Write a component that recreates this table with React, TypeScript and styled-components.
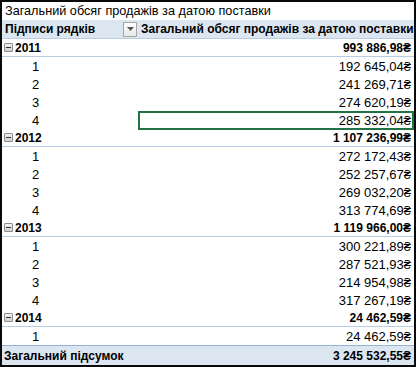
import React from "react";
import { styled, createGlobalStyle } from "styled-components";

const GlobalStyle = createGlobalStyle`
  html, body {
    margin: 0;
    padding: 0;
    background: #ffffff;
  }
  body {
    font-family: "Liberation Sans", Arial, sans-serif;
    font-size: 13px;
    color: #000000;
  }
`;

type Quarter = { q: number; value: string };
type Year = { year: number; total: string; quarters: Quarter[] };

const years: Year[] = [
  {
    year: 2011,
    total: "993 886,98₴",
    quarters: [
      { q: 1, value: "192 645,04₴" },
      { q: 2, value: "241 269,71₴" },
      { q: 3, value: "274 620,19₴" },
      { q: 4, value: "285 332,04₴" },
    ],
  },
  {
    year: 2012,
    total: "1 107 236,99₴",
    quarters: [
      { q: 1, value: "272 172,43₴" },
      { q: 2, value: "252 257,67₴" },
      { q: 3, value: "269 032,20₴" },
      { q: 4, value: "313 774,69₴" },
    ],
  },
  {
    year: 2013,
    total: "1 119 966,00₴",
    quarters: [
      { q: 1, value: "300 221,89₴" },
      { q: 2, value: "287 521,93₴" },
      { q: 3, value: "214 954,98₴" },
      { q: 4, value: "317 267,19₴" },
    ],
  },
  {
    year: 2014,
    total: "24 462,59₴",
    quarters: [{ q: 1, value: "24 462,59₴" }],
  },
];

const TITLE = "Загальний обсяг продажів за датою поставки";

export default function App() {
  return (
    <>
      <GlobalStyle />
      <Frame>
        <TitleRow>{TITLE}</TitleRow>
        <HeaderRow>
          <HeaderCell>
            <span>Підписи рядків</span>
            <FilterButton>
              <svg width="7" height="4" viewBox="0 0 7 4">
                <path d="M0 0 H7 L3.5 4 Z" fill="#555" />
              </svg>
            </FilterButton>
          </HeaderCell>
          <HeaderCell>{TITLE}</HeaderCell>
        </HeaderRow>
        {years.map((y) => (
          <React.Fragment key={y.year}>
            <Row $kind="group">
              <LabelCell $bold>
                <Toggle />
                {y.year}
              </LabelCell>
              <ValueCell $bold>{y.total}</ValueCell>
            </Row>
            {y.quarters.map((q) => (
              <Row key={q.q} $kind="item">
                <LabelCell $indent>{q.q}</LabelCell>
                <ValueCell $selected={y.year === 2011 && q.q === 4}>
                  {q.value}
                </ValueCell>
              </Row>
            ))}
          </React.Fragment>
        ))}
        <Row $kind="total">
          <LabelCell $bold>Загальний підсумок</LabelCell>
          <ValueCell $bold>3 245 532,55₴</ValueCell>
        </Row>
      </Frame>
    </>
  );
}

const Frame = styled.div`
  width: 416px;
  height: 367px;
  box-sizing: border-box;
  border: 2px solid #0a0a0a;
  display: flex;
  flex-direction: column;
  overflow: hidden;
  background: #ffffff;
`;

const TitleRow = styled.div`
  height: 18px;
  line-height: 18px;
  padding-left: 3px;
  font-size: 12.7px;
  white-space: nowrap;
`;

const HeaderRow = styled.div`
  display: grid;
  grid-template-columns: 136px 1fr;
  height: 18px;
  background: #dce6f1;
  border-bottom: 1px solid #b8cce4;
  font-weight: bold;
  font-size: 12px;
`;

const HeaderCell = styled.div`
  display: flex;
  align-items: center;
  justify-content: space-between;
  padding: 0 3px;
  white-space: nowrap;
  &:last-child {
    justify-content: flex-end;
    padding-right: 3px;
  }
`;

const FilterButton = styled.div`
  width: 14px;
  height: 15px;
  box-sizing: border-box;
  border: 1px solid #a6a6a6;
  background: linear-gradient(#ffffff, #e8e8e8);
  display: flex;
  align-items: center;
  justify-content: center;
  margin-right: -2px;
`;

const Row = styled.div<{ $kind: "group" | "item" | "total" }>`
  display: grid;
  grid-template-columns: 136px 1fr;
  height: 18px;
  box-sizing: border-box;
  flex: none;
  ${(p) =>
    p.$kind === "group" &&
    `
    border-bottom: 1px solid #b8cce4;
  `}
  ${(p) =>
    p.$kind === "total" &&
    `
    flex: 1;
    background: #dce6f1;
    border-top: 1px solid #95b3d7;
  `}
`;

const LabelCell = styled.div<{ $bold?: boolean; $indent?: boolean }>`
  display: flex;
  align-items: center;
  gap: 2px;
  padding-left: ${(p) => (p.$indent ? "30px" : "2px")};
  font-weight: ${(p) => (p.$bold ? "bold" : "normal")};
  font-size: ${(p) => (p.$bold ? "12px" : "13px")};
  white-space: nowrap;
`;

const ValueCell = styled.div<{ $bold?: boolean; $selected?: boolean }>`
  display: flex;
  align-items: center;
  justify-content: flex-end;
  padding-right: 3px;
  font-weight: ${(p) => (p.$bold ? "bold" : "normal")};
  font-size: ${(p) => (p.$bold ? "12px" : "13px")};
  white-space: nowrap;
  box-sizing: border-box;
  ${(p) =>
    p.$selected &&
    `
    border: 2px solid #217346;
    margin-right: 0;
    padding-right: 1px;
  `}
`;

const Toggle = styled.span`
  position: relative;
  width: 7px;
  height: 7px;
  border: 1px solid #8c8c8c;
  border-radius: 1px;
  background: linear-gradient(#f4f4f4, #cfcfcf);
  flex: none;
  &::after {
    content: "";
    position: absolute;
    left: 1px;
    right: 1px;
    top: 3px;
    height: 1px;
    background: #333;
  }
`;
